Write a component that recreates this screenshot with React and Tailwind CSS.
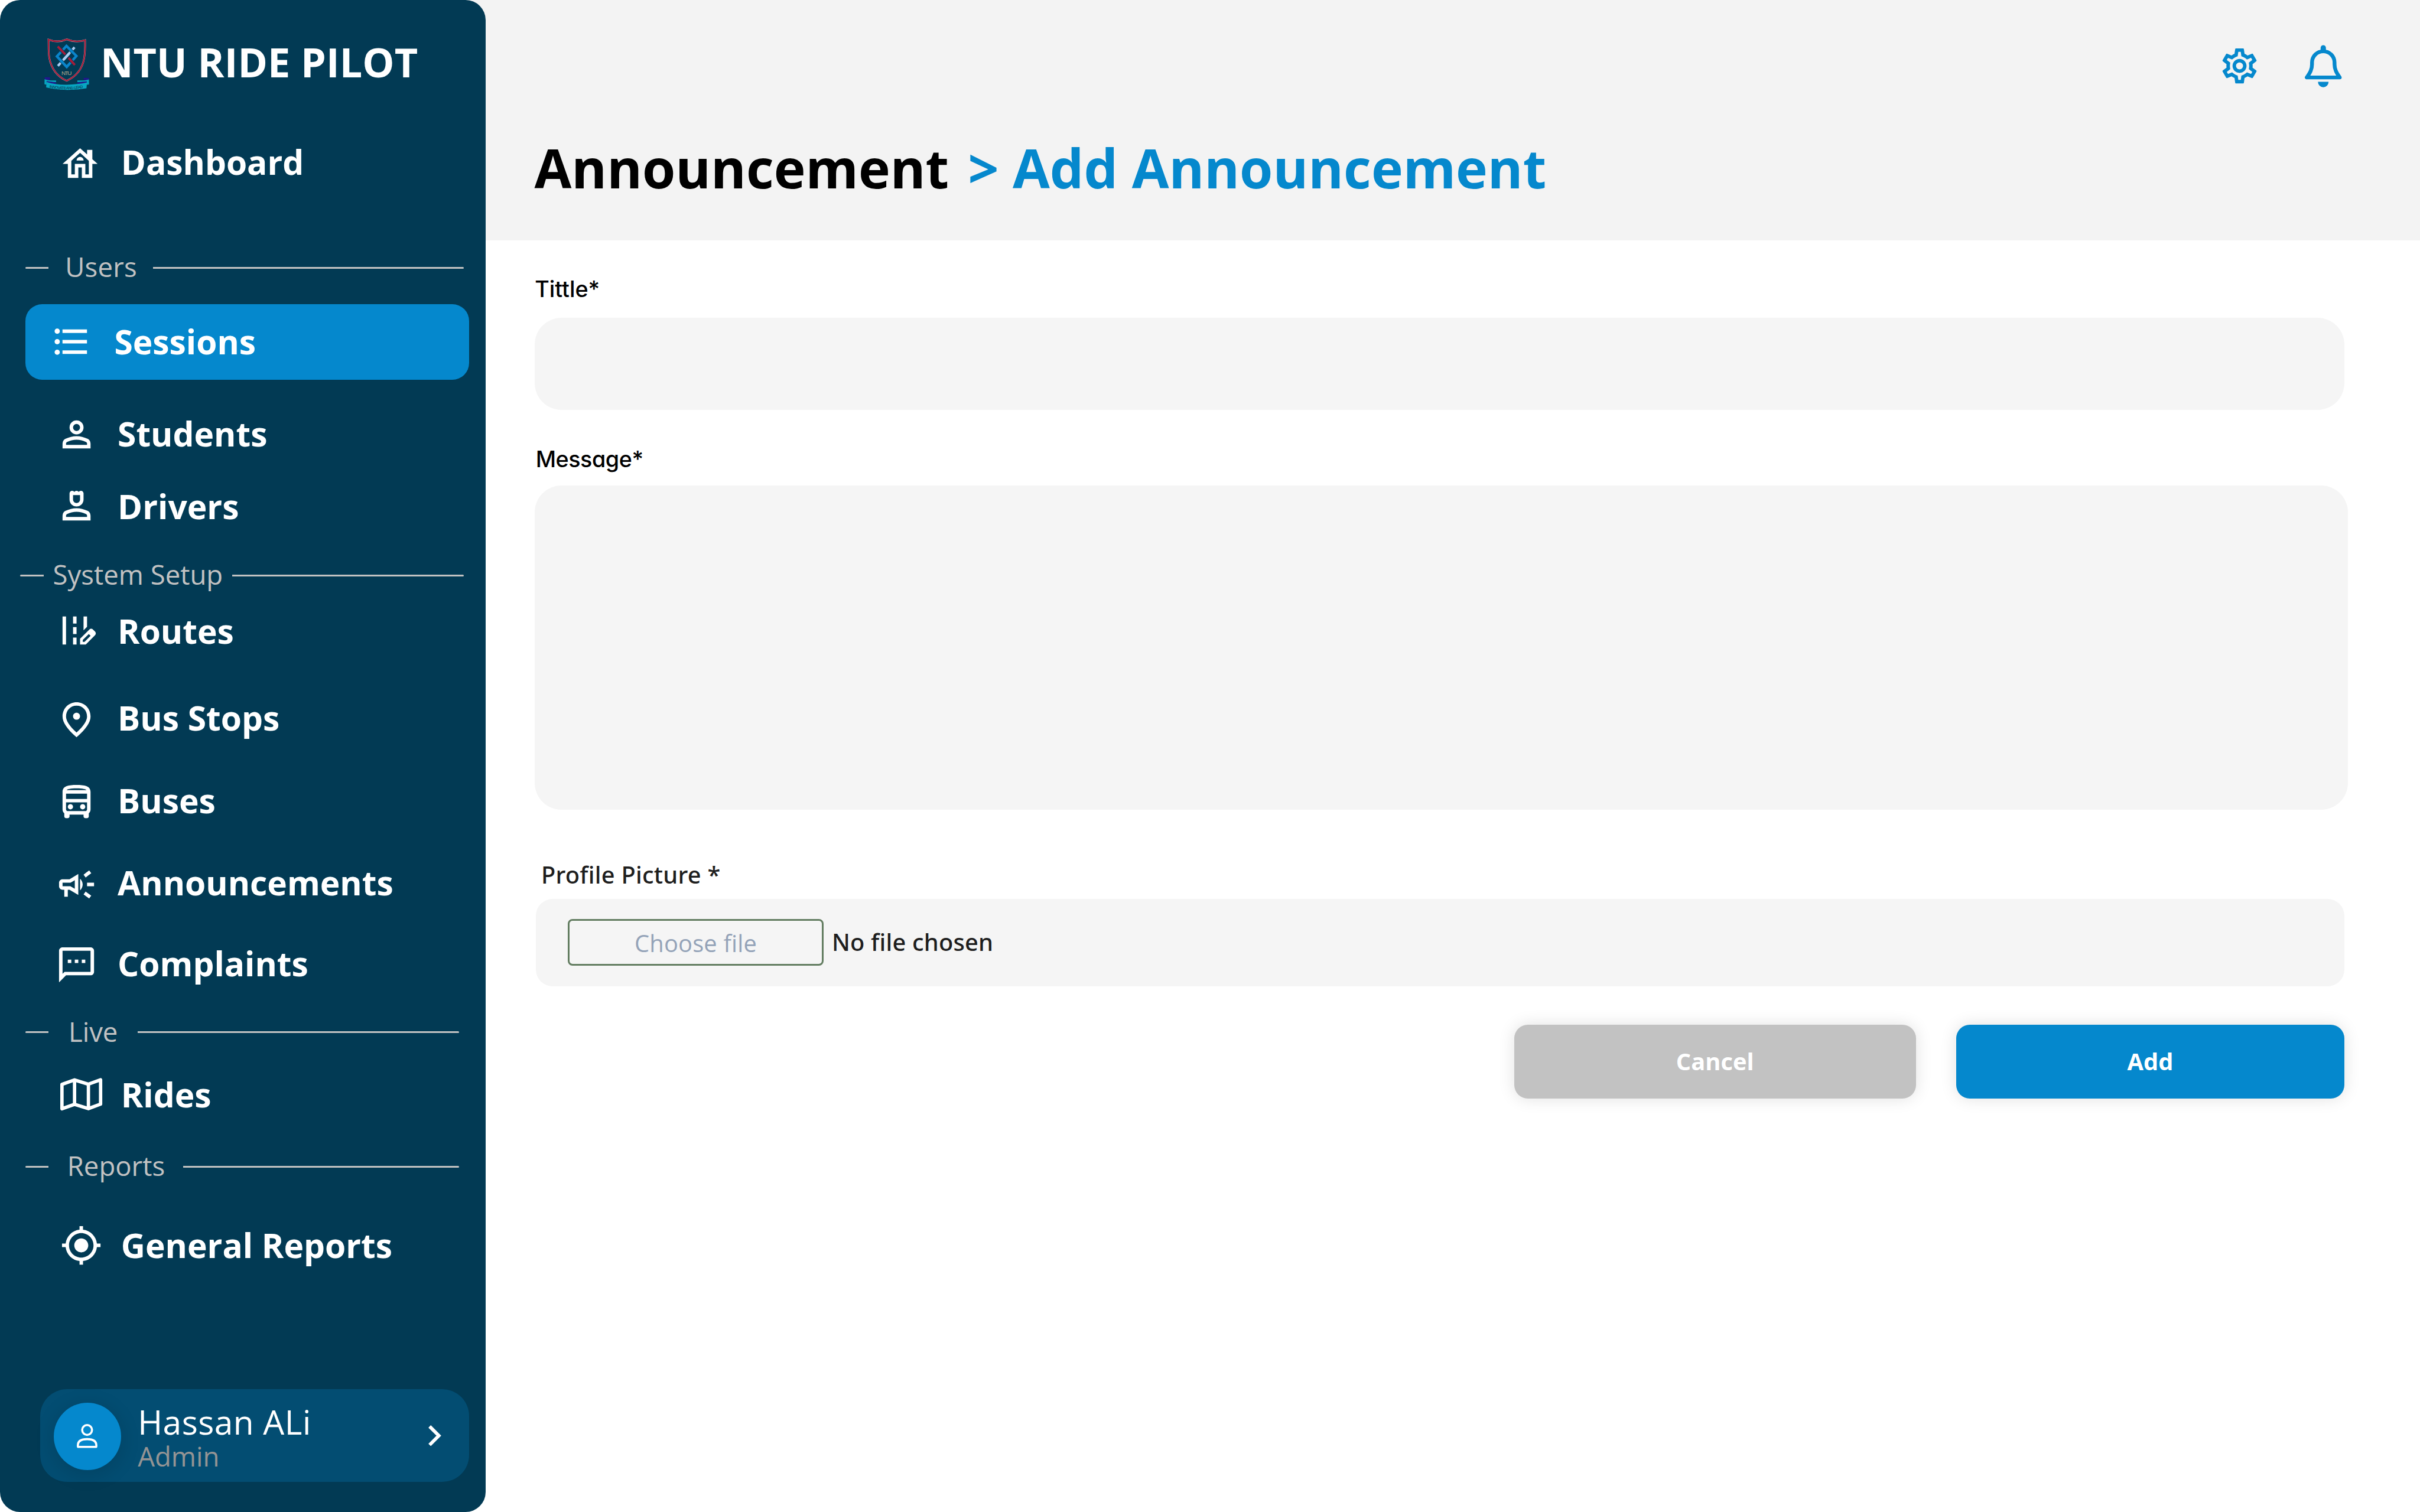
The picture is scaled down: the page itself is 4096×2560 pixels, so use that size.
import React from "react";
import {
  MdOutlineHouse,
  MdFormatListBulleted,
  MdOutlineEditRoad,
  MdOutlineFmdGood,
  MdOutlineDirectionsBus,
  MdOutlineCampaign,
  MdOutlineSms,
  MdMyLocation,
  MdOutlineSettings,
} from "react-icons/md";

/* One spacing step is one unit of a 1440-unit wide page. */

function Crest() {
  return (
    <svg viewBox="0 0 480 480" className="size-40 shrink-0" fill="none">
      <path
        d="M106 72Q172 98 237 70Q300 96 367 76C368 120 368 158 361 202C350 270 310 332 236 366C160 332 124 270 111 200C105 158 107 120 106 72Z"
        stroke="#c9b3bd"
        strokeWidth="12"
      />
      <path
        d="M106 72Q172 98 237 70Q300 96 367 76C368 120 368 158 361 202C350 270 310 332 236 366C160 332 124 270 111 200C105 158 107 120 106 72Z"
        stroke="#a61c39"
        strokeWidth="10"
      />
      <path d="M292 127L173 260" stroke="#a9cdf2" strokeWidth="17" />
      <path d="M234 117L305 189L236 267L166 192Z" stroke="#023a54" strokeWidth="25" />
      <path d="M234 117L305 189L236 267L166 192Z" stroke="#0a85cb" strokeWidth="18" />
      <path d="M186 136L228 181M246 201L282 238" stroke="#023a54" strokeWidth="24" />
      <path d="M254 171L213 216" stroke="#a9cdf2" strokeWidth="17" />
      <path d="M172 121L226 178M249 202L294 253" stroke="#a61c39" strokeWidth="16" />
      <text
        x="235"
        y="325"
        textAnchor="middle"
        textLength="74"
        className="font-['Liberation_Sans'] text-[42px]"
        fill="#b5a98c"
      >
        NTU
      </text>
      <path d="M78 342L116 341V362L80 356ZM357 345L394 346V362L357 360Z" fill="#22168c" />
      <path
        d="M78 354Q100 366 160 364L160 376L92 372V394L77 390ZM394 356Q370 366 312 364V376L380 372V394L395 392Z"
        fill="#08a6c2"
      />
      <path d="M92 368L160 379V389H94ZM380 370L310 379V390H378Z" fill="#22168c" />
      <path d="M92 374Q160 396 236 394Q312 394 381 378L377 420Q310 432 236 431Q160 430 89 414Z" fill="#08a6c2" />
      <path id="motto" d="M112 415Q236 440 358 415" />
      <text className="font-['Liberation_Sans'] text-[27px]" fill="#0b4560" stroke="#0b4560" strokeWidth="0.6">
        <textPath href="#motto" textLength="242">
          INNOVATE AND LEAD
        </textPath>
      </text>
    </svg>
  );
}

const personBody =
  "M4 20v-2.8q0-.85.438-1.562T5.6 14.55q1.55-.775 3.15-1.162T12 13t3.25.388t3.15 1.162q.725.375 1.163 1.088T20 17.2V20zm2-2h12v-.8q0-.275-.137-.5t-.363-.35q-1.35-.675-2.725-1.012T12 15t-2.775.338T6.5 16.35q-.225.125-.363.35T6 17.2z";

function StudentIcon({ className }) {
  return (
    <svg viewBox="0 0 24 24" fill="currentColor" fillRule="evenodd" className={className}>
      <path d={personBody} />
      <path d="M12 12a4 4 0 1 0 0-8a4 4 0 0 0 0 8zm0-2a2 2 0 1 1 0-4a2 2 0 0 1 0 4z" />
    </svg>
  );
}

function DriverIcon({ className }) {
  return (
    <svg viewBox="0 0 24 24" fill="currentColor" fillRule="evenodd" className={className}>
      <path d={personBody} />
      <path d="M12 12c2.21 0 4-1.79 4-4V4.5C16 3.67 15.33 3 14.5 3c-.52 0-.98.27-1.25.67-.27-.4-.73-.67-1.25-.67s-.98.27-1.25.67c-.27-.4-.73-.67-1.25-.67C8.67 3 8 3.67 8 4.5V8c0 2.21 1.79 4 4 4zm-2-6.5h4V8c0 1.1-.9 2-2 2s-2-.9-2-2V5.5z" />
    </svg>
  );
}

function MapIcon({ className }) {
  return (
    <svg viewBox="0 0 100 78" fill="none" stroke="currentColor" strokeWidth="8" strokeLinejoin="round" className={className}>
      <path d="M4 15.5L34 4.8L67 15L96 4.5V62.5L67 73.2L34 63L4 73.5Z" />
      <path d="M34 4.8V63M67 15V73.2" />
    </svg>
  );
}

function BellIcon() {
  return (
    <svg viewBox="0 0 88 101" fill="none" className="h-25.25 w-22 text-[#0588cd]">
      <path
        d="M44 15.3C29 15.3 17.2 27 17.2 42V46C17.2 58 13 66 4.7 77.5H83.3C75 66 70.8 58 70.8 46V42C70.8 27 59 15.3 44 15.3Z"
        stroke="currentColor"
        strokeWidth="9"
        strokeLinejoin="round"
      />
      <path d="M44 7V13" stroke="currentColor" strokeWidth="12.6" strokeLinecap="round" />
      <path d="M31.3 88H56.7A12.7 12.8 0 0 1 31.3 88Z" fill="currentColor" />
    </svg>
  );
}

function NavItem({ icon: Icon, label, row, iconSize = "size-25", text }) {
  return (
    <a className={`flex items-center ${row}`}>
      <Icon className={`shrink-0 ${iconSize}`} />
      <span className={`text-[56.89px] leading-none font-bold whitespace-nowrap ${text}`}>{label}</span>
    </a>
  );
}

function Divider({ label, row, text, end }) {
  return (
    <div className={`flex h-20 items-center ${row} ${end}`}>
      <span className="h-1 w-14 shrink-0 rounded-l-full bg-[#c2c2c2]" />
      <span className={`shrink-0 text-[45.51px] leading-none whitespace-nowrap text-[#c2c2c2] ${text}`}>{label}</span>
      <span className="h-1 flex-1 rounded-r-full bg-[#c2c2c2]" />
    </div>
  );
}

function Sidebar() {
  return (
    <aside className="relative z-10 flex h-900 w-289 shrink-0 flex-col rounded-[34px] bg-[#023a54] text-white">
      <div className="mt-17.5 flex h-40 items-center pl-20">
        <Crest />
        <span className="-ml-0.25 pb-1.25 text-[68.27px] leading-none font-bold tracking-[0.08px] whitespace-nowrap">
          NTU RIDE PILOT
        </span>
      </div>
      <NavItem icon={MdOutlineHouse} label="Dashboard" row="mt-27.5 h-25 pl-35.25" text="ml-11.75 pb-2" />
      <Divider label="Users" row="mt-39.5 pl-15" end="pr-13" text="ml-9.75 w-52.25 pb-1 tracking-[0.2px]" />
      <NavItem
        icon={MdFormatListBulleted}
        label="Sessions"
        row="mt-11.5 ml-15 h-45 w-264 rounded-[28.5px] bg-[#0588cd] pl-15"
        text="ml-13 pb-0.5"
      />
      <NavItem icon={StudentIcon} label="Students" row="mt-20 h-25 pl-33" text="ml-12 pb-0.25" />
      <NavItem icon={DriverIcon} label="Drivers" row="mt-18 h-25 pl-33" text="ml-12" />
      <Divider label="System Setup" row="mt-18.5 pl-12" end="pr-13" text="ml-5.5 w-106.5 pb-1" />
      <NavItem icon={MdOutlineEditRoad} label="Routes" row="mt-10.5 h-25 pl-33" text="ml-12" />
      <NavItem icon={MdOutlineFmdGood} label="Bus Stops" row="mt-28 h-25 pl-33" text="ml-12 pb-2.25" />
      <NavItem icon={MdOutlineDirectionsBus} label="Buses" row="mt-24 h-25 pl-33" text="ml-12 pb-2" />
      <NavItem icon={MdOutlineCampaign} label="Announcements" row="mt-24 h-25 pl-33" text="ml-12 pb-2" />
      <NavItem icon={MdOutlineSms} label="Complaints" row="mt-23 h-25 pl-33" text="ml-12 pb-2" />
      <Divider label="Live" row="mt-17.5 pl-15" end="pr-16" text="ml-11.75 w-41.25 pb-0.75" />
      <NavItem icon={MapIcon} label="Rides" row="mt-14.5 h-25 pl-36" iconSize="w-25 h-19.5" text="ml-11" />
      <Divider label="Reports" row="mt-20.5 pl-15" end="pr-16" text="ml-11 w-69 pb-1" />
      <NavItem icon={MdMyLocation} label="General Reports" row="mt-24.5 h-25 pl-36" text="ml-11" />

      <div className="mt-73 ml-24 flex h-55 w-255 rounded-[45.5px] bg-[#034d72] pr-16.25 pl-8">
        <div className="mt-8 flex size-40 items-center justify-center rounded-full bg-[#0588cd] shadow-[0_6px_34px_rgba(0,0,0,0.14)]">
          <svg viewBox="0 0 49 57" fill="none" stroke="white" strokeWidth="5" className="h-14.25 w-12.25">
            <circle cx="24.5" cy="14.2" r="11.7" />
            <path d="M2.5 53V51C2.5 41 10 36 24.5 36S46.5 41 46.5 51V53Q46.5 54.5 45 54.5H4Q2.5 54.5 2.5 53Z" />
          </svg>
        </div>
        <div className="mt-8.5 ml-10 flex flex-col whitespace-nowrap">
          <span className="flex h-22 items-center text-[56.89px] leading-none tracking-[0.45px]">Hassan ALi</span>
          <span className="flex h-19 items-center text-[45.51px] leading-none text-[#949494]">Admin</span>
        </div>
        <svg viewBox="0 0 32 50" fill="none" stroke="white" strokeWidth="8" className="ml-auto h-12.5 w-8 self-center">
          <path d="M3 3L25 25L3 47" />
        </svg>
      </div>
    </aside>
  );
}

function Header() {
  return (
    <header className="flex h-143 flex-col bg-[#f3f3f3] pl-41">
      <div className="mt-26.75 flex h-25.25 items-center justify-end gap-26.5 pr-46.5">
        <MdOutlineSettings className="size-25 text-[#0588cd]" />
        <BellIcon />
      </div>
      <h1 className="mt-27.5 flex h-40 items-center pt-1 text-[91.02px] leading-none font-bold whitespace-nowrap">
        <span className="w-258 text-black">Announcement</span>
        <span className="text-[#0588cd]">&gt; Add Announcement</span>
      </h1>
    </header>
  );
}

function AnnouncementForm() {
  return (
    <form className="flex flex-col pl-41">
      <label className="mt-20.75 flex h-16 items-center pt-1.25 pl-0.25 font-['Inter'] text-[37.7px] leading-none font-medium text-black [font-feature-settings:'cv11']">
        Tittle*
      </label>
      <div className="mt-9.25 h-55 w-1077 rounded-[45.5px] bg-[#f5f5f5]" />
      <label className="mt-20.75 flex h-16 items-center pt-1.25 pl-0.75 font-['Inter'] text-[37.7px] leading-none font-medium tracking-[-0.45px] text-black [font-feature-settings:'cv11']">
        Message*
      </label>
      <div className="mt-8.25 h-193 w-1079 rounded-[45.5px] bg-[#f5f5f5]" />
      <label className="mt-30.25 ml-4 flex h-16 items-center pt-0.75 font-['Noto_Sans'] text-[39.82px] leading-none font-medium tracking-[0.25px] text-[#1e1e1e]">
        Profile Picture *
      </label>
      <div className="mt-6.75 ml-1 flex h-52 w-1076 items-center rounded-[28.5px] bg-[#f5f5f5] pl-19">
        <button
          type="button"
          className="flex h-28 w-152 items-center justify-center rounded-[8px] border-[3px] border-[#637d61] pt-1.25 text-[39.82px] leading-none tracking-[0.2px] text-[#94a3b8]"
        >
          Choose file
        </button>
        <span className="ml-5 pb-0.5 font-['Noto_Sans'] text-[39.82px] leading-none font-medium tracking-[0.2px] text-[#1e1e1e]">
          No file chosen
        </span>
      </div>
      <div className="mt-23 flex h-44 w-1077 justify-end gap-24 text-[39.82px] leading-none font-bold text-white">
        <button
          type="button"
          className="w-239 rounded-[23px] bg-[#c2c2c2] pb-0.5 shadow-[0_0_28px_rgba(0,0,0,0.12)]"
        >
          Cancel
        </button>
        <button
          type="button"
          className="w-231 rounded-[23px] bg-[#0588cd] pb-0.5 shadow-[0_0_28px_rgba(0,0,0,0.12)]"
        >
          Add
        </button>
      </div>
    </form>
  );
}

export default function App() {
  return (
    <div className="flex h-[2560px] w-[4096px] overflow-hidden bg-white font-['Open_Sans',sans-serif] [--spacing:2.844444px]">
      <Sidebar />
      <main className="-ml-12 flex-1">
        <Header />
        <AnnouncementForm />
      </main>
    </div>
  );
}
